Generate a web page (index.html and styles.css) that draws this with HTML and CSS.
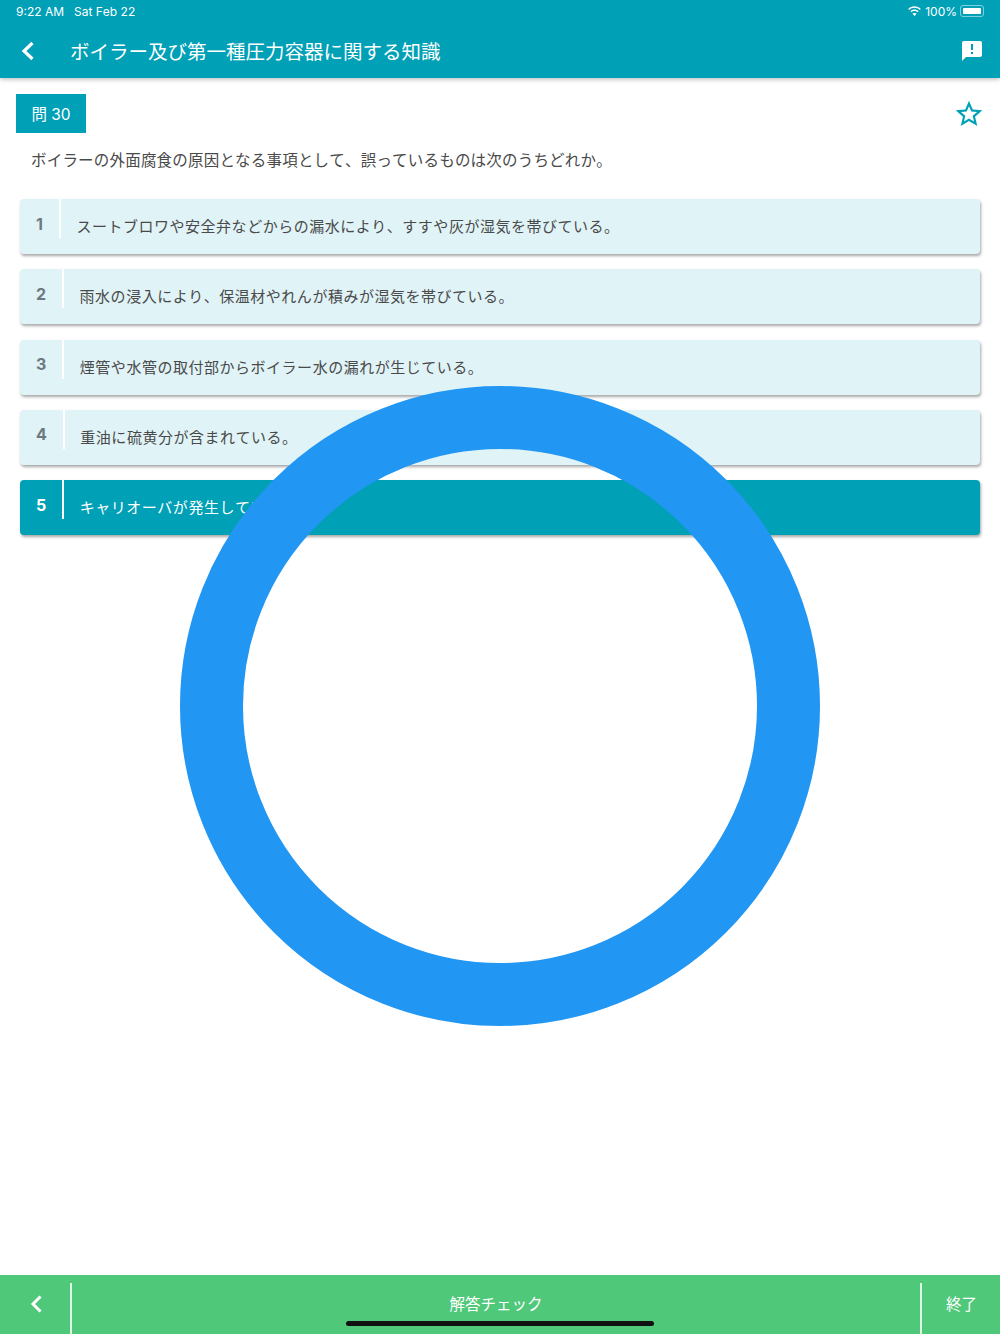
FILE: index.html
```html
<!DOCTYPE html>
<html lang="ja">
<head>
  <meta charset="UTF-8" />
  <meta name="viewport" content="width=device-width, initial-scale=1.0" />
  <title>問 30</title>
  <link rel="stylesheet" href="styles.css">
</head>
<body>
  <div class="header">
    <div class="status-bar">
      <span class="status-time">9:22 AM</span>
      <span class="status-date">Sat Feb 22</span>
      <span class="status-right">
        <svg class="wifi-icon" viewBox="0 0 16 12"><path d="M8 2.6c2.2 0 4.2.9 5.7 2.3l1-1.1C13 2 10.600 1 8 1S3 2 1.300 3.800l1 1.100C3.800 3.500 5.800 2.600 8 2.600zM8 6c1.300 0 2.500.5 3.400 1.400l1-1.100C11.200 5.100 9.700 4.400 8 4.400s-3.200.7-4.400 1.900l1 1.100C5.500 6.500 6.700 6 8 6zm0 3.200L10.200 9c-.6-.6-1.400-1-2.200-1s-1.600.4-2.200 1L8 11.300 10.200 9z"/></svg>
        <span>100%</span>
        <span class="battery"><span class="battery-fill"></span></span>
      </span>
    </div>
    <div class="app-bar">
      <svg class="back-icon" viewBox="0 0 14 20"><path d="M11.500 2L3 10l8.500 8"/></svg>
      <h1>ボイラー及び第一種圧力容器に関する知識</h1>
      <svg class="report-icon" viewBox="0 0 24 24"><path d="M20 2H4c-1.100 0-1.990.9-1.990 2L2 22l4-4h14c1.100 0 2-.9 2-2V4c0-1.100-.9-2-2-2zm-7 9h-2V5h2v6zm0 4h-2v-2h2v2z"/></svg>
    </div>
  </div>

  <div class="main-content">
    <div class="question-top">
      <div class="question-badge">問 30</div>
      <svg class="star-icon" viewBox="0 0 24 24"><path d="M22 9.240l-7.190-.62L12 2 9.190 8.630 2 9.240l5.460 4.730L5.820 21 12 17.270 18.180 21l-1.630-7.030L22 9.240zM12 15.400l-3.760 2.270 1-4.280-3.320-2.880 4.380-.38L12 6.100l1.710 4.040 4.380.38-3.320 2.880 1 4.280L12 15.400z"/></svg>
    </div>
    <p class="question-text">ボイラーの外面腐食の原因となる事項として、誤っているものは次のうちどれか。</p>

    <div class="options">
      <div class="option">
        <div class="option-num">1</div>
        <div class="option-text">スートブロワや安全弁などからの漏水により、すすや灰が湿気を帯びている。</div>
      </div>
      <div class="option">
        <div class="option-num">2</div>
        <div class="option-text">雨水の浸入により、保温材やれんが積みが湿気を帯びている。</div>
      </div>
      <div class="option">
        <div class="option-num">3</div>
        <div class="option-text">煙管や水管の取付部からボイラー水の漏れが生じている。</div>
      </div>
      <div class="option">
        <div class="option-num">4</div>
        <div class="option-text">重油に硫黄分が含まれている。</div>
      </div>
      <div class="option selected">
        <div class="option-num">5</div>
        <div class="option-text">キャリオーバが発生している。</div>
      </div>
    </div>
  </div>

  <div class="footer">
    <div class="footer-back">
      <svg class="footer-back-icon" viewBox="0 0 14 20"><path d="M11.500 2.500L4 10l7.500 7.500"/></svg>
    </div>
    <div class="footer-check">解答チェック</div>
    <div class="footer-end">終了</div>
  </div>

  <div class="home-indicator"></div>
  <div class="ring"></div>
</body>
</html>
```

FILE: styles.css
```css
* {
  box-sizing: border-box;
}

body {
  margin: 0;
  width: 1000px;
  height: 1334px;
  overflow: hidden;
  position: relative;
  display: flex;
  flex-direction: column;
  font-family: Inter, "Noto Sans CJK JP", sans-serif;
  font-kerning: none;
  text-spacing-trim: space-all;
  background-color: white;
  color: #4a4a4a;
}

.header {
  height: 78px;
  background-color: #00a0b6;
  color: white;
  box-shadow: 0 1px 5px rgba(0, 0, 0, 0.3);
}

.status-bar {
  height: 22px;
  padding: 0 16px;
  display: flex;
  align-items: center;
  font-size: 12px;
}

.status-date {
  margin-left: 10px;
}

.status-right {
  margin-left: auto;
  display: flex;
  align-items: center;
  gap: 3px;
}

.wifi-icon {
  width: 15px;
  height: 12px;
  fill: white;
}

.battery {
  width: 24px;
  height: 12px;
  padding: 2px;
  border: 1px solid rgba(255, 255, 255, 0.5);
  border-radius: 3px;
  display: flex;
}

.battery-fill {
  flex: 1;
  background: white;
  border-radius: 1px;
}

.app-bar {
  height: 56px;
  padding-left: 21px;
  padding-right: 16px;
  display: flex;
  align-items: center;
}

.app-bar h1 {
  margin: 0 0 0 35px;
  font-size: 19.500px;
  font-weight: 400;
}

.back-icon {
  width: 14px;
  height: 20px;
  margin-top: 2px;
  fill: none;
  stroke: white;
  stroke-width: 3.200;
}

.report-icon {
  width: 24px;
  height: 24px;
  margin-left: auto;
  margin-top: 2px;
  fill: white;
}

.main-content {
  flex: 1;
  padding: 16px 0 0;
}

.question-top {
  padding: 0 15px 0 16px;
  display: flex;
  justify-content: space-between;
  align-items: center;
}

.question-badge {
  width: 70px;
  height: 39px;
  padding-bottom: 1px;
  background-color: #00a0b6;
  color: white;
  font-size: 15.500px;
  display: flex;
  align-items: center;
  justify-content: center;
}

.star-icon {
  width: 32px;
  height: 32px;
  fill: #00a0b6;
}

.question-text {
  margin: 16px 0 0 31px;
  font-size: 15.500px;
  letter-spacing: 0.200px;
  line-height: 24px;
}

.options {
  margin: 26.300px 20px 0;
  display: flex;
  flex-direction: column;
  gap: 15.200px;
}

.option {
  height: 55px;
  background-color: #e0f3f7;
  border-radius: 4px;
  box-shadow: 1px 2px 3px rgba(0, 0, 0, 0.35);
  display: flex;
}

.option-num {
  height: 39px;
  padding: 10px 16px 0;
  border-right: 2px solid white;
  font-size: 16px;
  font-weight: 700;
  color: #6c7a80;
  display: flex;
  align-items: center;
}

.option-text {
  padding: 16px 0 0 15.500px;
  font-size: 15px;
  letter-spacing: 0.520px;
  line-height: 24px;
}

.option.selected {
  background-color: #00a0b6;
  color: white;
}

.option.selected .option-num {
  color: white;
}

.footer {
  height: 59px;
  background-color: #50c87a;
  color: white;
  font-size: 15.500px;
  display: flex;
}

.footer-back {
  width: 72px;
  height: 51px;
  margin-top: 8px;
  padding: 11px 0 0 29px;
  border-right: 2px solid #dff5e7;
}

.footer-back-icon {
  width: 14px;
  height: 20px;
  fill: none;
  stroke: white;
  stroke-width: 3;
}

.footer-check {
  flex: 1;
  padding-top: 17px;
  text-align: center;
}

.footer-end {
  width: 80px;
  height: 51px;
  margin-top: 8px;
  padding: 9px 0 0 24px;
  border-left: 2px solid #dff5e7;
}

.home-indicator {
  position: absolute;
  left: 346px;
  top: 1321px;
  width: 308px;
  height: 5px;
  background-color: #111;
  border-radius: 3px;
}

.ring {
  position: absolute;
  left: 180px;
  top: 386px;
  width: 640px;
  height: 640px;
  border: 63px solid #2196f3;
  border-radius: 50%;
}
```
